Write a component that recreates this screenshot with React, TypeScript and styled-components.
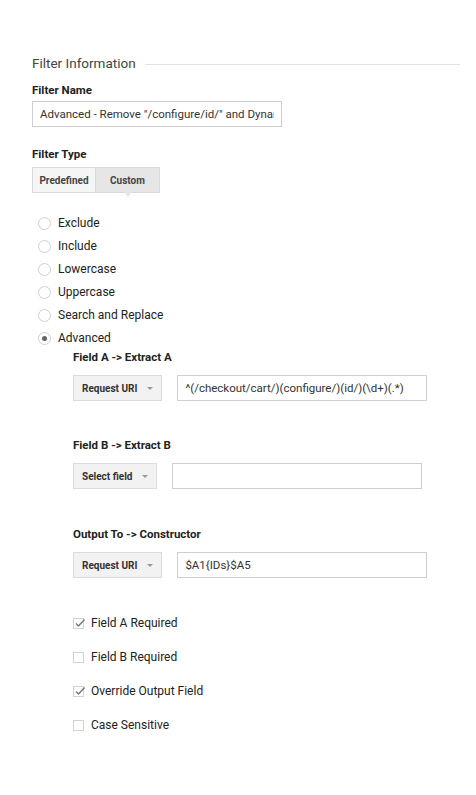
import React, { useState } from "react";
import styled, { createGlobalStyle } from "styled-components";

const GlobalStyle = createGlobalStyle`
  body {
    margin: 0;
    background: #ffffff;
    font-family: Roboto, "Liberation Sans", Arial, sans-serif;
    color: #222;
  }
`;

const Page = styled.div`
  width: 476px;
  height: 795px;
  padding: 0 16px 0 32px;
  box-sizing: border-box;
  overflow: hidden;
`;

const SectionHeader = styled.div`
  display: flex;
  align-items: center;
  gap: 9px;
  height: 20px;
  margin-top: 53px;
  font-size: 13.5px;
  color: #444;

  &::after {
    content: "";
    flex: 1;
    height: 1px;
    background: #e3e3e3;
    margin-top: 2px;
  }
`;

const Label = styled.div<{ $top: number }>`
  font-size: 11.5px;
  font-weight: 700;
  color: #222;
  line-height: 14px;
  margin-top: ${(p) => p.$top}px;
`;

const TextInput = styled.input<{ $top?: number }>`
  display: block;
  width: 250px;
  height: 26px;
  box-sizing: border-box;
  border: 1px solid #cfcfcf;
  border-radius: 0;
  padding: 0 7px;
  margin: ${(p) => p.$top ?? 0}px 0 0;
  font-family: Roboto, "Liberation Sans", Arial, sans-serif;
  font-size: 11.5px;
  color: #333;
  outline: none;
`;

const Segmented = styled.div`
  display: flex;
  margin-top: 6px;
  width: 128px;
`;

const Segment = styled.button<{ $active?: boolean }>`
  position: relative;
  width: 64px;
  height: 26px;
  padding: 0;
  border: 1px solid #d9d9d9;
  border-left-width: ${(p) => (p.$active ? 0 : 1)}px;
  background: ${(p) => (p.$active ? "#e6e6e6" : "#f5f5f5")};
  font-family: Roboto, "Liberation Sans", Arial, sans-serif;
  font-size: 10px;
  font-weight: 700;
  color: #444;
  cursor: pointer;

  ${(p) =>
    p.$active &&
    `
    &::after {
      content: "";
      position: absolute;
      left: 50%;
      bottom: -5px;
      margin-left: -4px;
      border-left: 4px solid transparent;
      border-right: 4px solid transparent;
      border-top: 5px solid #e6e6e6;
    }
  `}
`;

const RadioList = styled.div`
  display: flex;
  flex-direction: column;
  gap: 9px;
  margin-top: 23px;
`;

const RadioRow = styled.label`
  display: flex;
  align-items: center;
  gap: 7px;
  height: 14px;
  margin-left: 6px;
  font-size: 12px;
  color: #222;
  cursor: pointer;
`;

const RadioCircle = styled.span<{ $checked?: boolean }>`
  width: 11px;
  height: 11px;
  border: 1px solid #cfcfcf;
  border-radius: 50%;
  display: flex;
  align-items: center;
  justify-content: center;

  &::after {
    content: "";
    width: 5px;
    height: 5px;
    border-radius: 50%;
    background: ${(p) => (p.$checked ? "#666" : "transparent")};
  }
`;

const Advanced = styled.div`
  padding-left: 41px;
`;

const FieldRow = styled.div`
  display: flex;
  align-items: center;
  gap: 15px;
  margin-top: 11px;
`;

const SelectButton = styled.button`
  display: flex;
  align-items: center;
  gap: 10px;
  height: 26px;
  padding: 0 8px 0 8px;
  border: 1px solid #dcdcdc;
  background: #f2f2f2;
  font-family: Roboto, "Liberation Sans", Arial, sans-serif;
  font-size: 10px;
  font-weight: 700;
  color: #333;
  cursor: pointer;

  &::after {
    content: "";
    border-left: 3px solid transparent;
    border-right: 3px solid transparent;
    border-top: 3px solid #999;
  }
`;

const CheckList = styled.div`
  display: flex;
  flex-direction: column;
  gap: 20px;
  margin-top: 38px;
`;

const CheckRow = styled.label`
  display: flex;
  align-items: center;
  gap: 7px;
  height: 14px;
  font-size: 12px;
  color: #222;
  cursor: pointer;
`;

const CheckBox = styled.span`
  width: 11px;
  height: 11px;
  border: 1px solid #d2d2d2;
  box-sizing: border-box;
  position: relative;

  svg {
    position: absolute;
    left: 0;
    top: -2px;
  }
`;

const radios = ["Exclude", "Include", "Lowercase", "Uppercase", "Search and Replace", "Advanced"];

const fields = [
  { label: "Field A -> Extract A", select: "Request URI", value: "^(/checkout/cart/)(configure/)(id/)(\\d+)(.*)", top: 5 },
  { label: "Field B -> Extract B", select: "Select field", value: "", top: 37 },
  { label: "Output To -> Constructor", select: "Request URI", value: "$A1{IDs}$A5", top: 38 },
];

const App: React.FC = () => {
  const [type, setType] = useState("Custom");
  const [radio, setRadio] = useState("Advanced");
  const [checks, setChecks] = useState<Record<string, boolean>>({
    "Field A Required": true,
    "Field B Required": false,
    "Override Output Field": true,
    "Case Sensitive": false,
  });

  return (
    <>
      <GlobalStyle />
      <Page>
        <SectionHeader>Filter Information</SectionHeader>
        <Label $top={10}>Filter Name</Label>
        <TextInput $top={4} defaultValue={'Advanced - Remove "/configure/id/" and Dynamic'} />

        <Label $top={20}>Filter Type</Label>
        <Segmented>
          {["Predefined", "Custom"].map((t) => (
            <Segment key={t} $active={type === t} onClick={() => setType(t)}>
              {t}
            </Segment>
          ))}
        </Segmented>

        <RadioList>
          {radios.map((r) => (
            <RadioRow key={r} onClick={() => setRadio(r)}>
              <RadioCircle $checked={radio === r} />
              {r}
            </RadioRow>
          ))}
        </RadioList>

        <Advanced>
          {fields.map((f) => (
            <div key={f.label}>
              <Label $top={f.top}>{f.label}</Label>
              <FieldRow>
                <SelectButton>{f.select}</SelectButton>
                <TextInput defaultValue={f.value} />
              </FieldRow>
            </div>
          ))}

          <CheckList>
            {Object.keys(checks).map((c) => (
              <CheckRow key={c} onClick={() => setChecks({ ...checks, [c]: !checks[c] })}>
                <CheckBox>
                  {checks[c] && (
                    <svg width="12" height="12" viewBox="0 0 12 12">
                      <path d="M2 6.5 L4.5 9 L10.5 2.5" fill="none" stroke="#777" strokeWidth="1.4" />
                    </svg>
                  )}
                </CheckBox>
                {c}
              </CheckRow>
            ))}
          </CheckList>
        </Advanced>
      </Page>
    </>
  );
};

export default App;
